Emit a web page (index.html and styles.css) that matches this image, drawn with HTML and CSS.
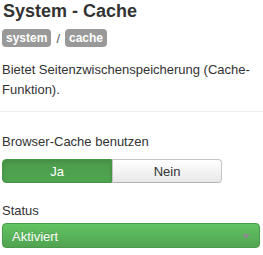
FILE: index.html
```html
<!DOCTYPE html>
<html lang="de">
<head>
<meta charset="utf-8">
<title>System - Cache</title>
<link rel="stylesheet" href="styles.css">
</head>
<body>
<div class="page">
  <h1 class="title">System - Cache</h1>
  <div class="crumbs">
    <span class="tag">system</span>
    <span class="sep">/</span>
    <span class="tag">cache</span>
  </div>
  <p class="desc">Bietet Seitenzwischenspeicherung (Cache-Funktion).</p>
  <hr class="rule">
  <div class="field">
    <div class="label">Browser-Cache benutzen</div>
    <div class="toggle">
      <span class="opt on">Ja</span>
      <span class="opt">Nein</span>
    </div>
  </div>
  <div class="field status">
    <div class="label">Status</div>
    <div class="select">
      <span class="value">Aktiviert</span>
      <span class="caret"></span>
    </div>
  </div>
</div>
</body>
</html>
```
FILE: styles.css
```css
html, body {
  margin: 0;
  padding: 0;
  background: #fff;
}
body {
  font-family: "Liberation Sans", Arial, sans-serif;
  color: #333;
  font-size: 13px;
}
.page {
  padding: 0 2px;
}
.title {
  margin: 0;
  padding-top: 1px;
  font-size: 18px;
  line-height: 20px;
  font-weight: bold;
  color: #333;
  padding-left: 1px;
}
.crumbs {
  margin-top: 8px;
  display: flex;
  align-items: center;
  height: 18px;
}
.tag {
  display: inline-block;
  background: #999;
  color: #fff;
  font-size: 12px;
  font-weight: bold;
  line-height: 14px;
  padding: 2px 4px;
  border-radius: 4px;
}
.sep {
  color: #555;
  font-size: 13px;
  margin: 0 5px;
}
.desc {
  margin: 13px 0 0;
  line-height: 20px;
  font-size: 13px;
}
.rule {
  margin: 11px -2px 0;
  border: 0;
  border-top: 1px solid #eee;
  height: 0;
}
.field {
  margin-top: 20px;
}
.label {
  line-height: 20px;
  font-size: 13px;
  color: #333;
}
.toggle {
  margin-top: 7px;
  display: flex;
  width: 220px;
  height: 24px;
}
.opt {
  flex: 1;
  display: flex;
  align-items: center;
  justify-content: center;
  font-size: 13px;
  box-sizing: border-box;
  border: 1px solid #c5c5c5;
  border-bottom-color: #b3b3b3;
  background: linear-gradient(#ffffff, #e8e8e8);
  color: #333;
  border-radius: 0 4px 4px 0;
}
.opt.on {
  background: linear-gradient(#4c9c4c, #50a550);
  border-color: #469446;
  color: #fff;
  border-radius: 4px 0 0 4px;
  box-shadow: inset 0 2px 4px rgba(0,0,0,0.1);
}
.status {
  margin-top: 18px;
}
.select {
  margin-top: 2px;
  box-sizing: border-box;
  width: 258px;
  height: 25px;
  display: flex;
  align-items: center;
  justify-content: space-between;
  padding: 1px 9px 0 9px;
  border: 1px solid #4a9a4a;
  border-radius: 4px;
  background: linear-gradient(#62c462, #51a351);
}
.value {
  color: #fff;
  font-size: 13px;
  text-shadow: 0 -1px 0 rgba(0,0,0,0.15);
}
.caret {
  width: 0;
  height: 0;
  border-left: 4px solid transparent;
  border-right: 4px solid transparent;
  border-top: 5px solid #8a8a8a;
}
```
